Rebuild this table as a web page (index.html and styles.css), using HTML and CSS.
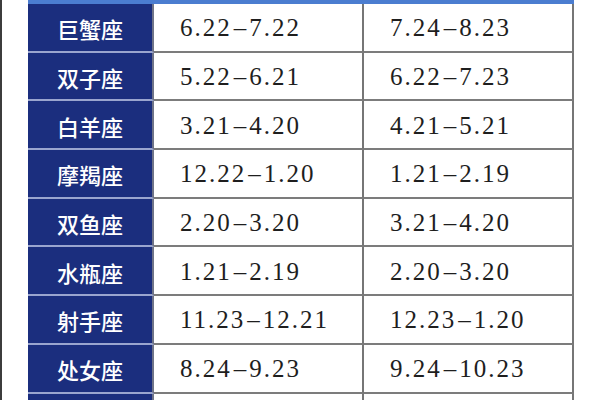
FILE: index.html
```html
<!DOCTYPE html>
<html lang="zh">
<head>
<meta charset="utf-8">
<title>星座日期对照表</title>
<link rel="stylesheet" href="styles.css">
</head>
<body>
<div class="page">
  <div class="table">
    <div class="head"></div>

    <div class="name">巨蟹座</div><div class="date">6.22<span class="sep">–</span>7.22</div><div class="date">7.24<span class="sep">–</span>8.23</div>
    <div class="name">双子座</div><div class="date">5.22<span class="sep">–</span>6.21</div><div class="date">6.22<span class="sep">–</span>7.23</div>
    <div class="name">白羊座</div><div class="date">3.21<span class="sep">–</span>4.20</div><div class="date">4.21<span class="sep">–</span>5.21</div>
    <div class="name">摩羯座</div><div class="date">12.22<span class="sep">–</span>1.20</div><div class="date">1.21<span class="sep">–</span>2.19</div>
    <div class="name">双鱼座</div><div class="date">2.20<span class="sep">–</span>3.20</div><div class="date">3.21<span class="sep">–</span>4.20</div>
    <div class="name">水瓶座</div><div class="date">1.21<span class="sep">–</span>2.19</div><div class="date">2.20<span class="sep">–</span>3.20</div>
    <div class="name">射手座</div><div class="date">11.23<span class="sep">–</span>12.21</div><div class="date">12.23<span class="sep">–</span>1.20</div>
    <div class="name">处女座</div><div class="date">8.24<span class="sep">–</span>9.23</div><div class="date">9.24<span class="sep">–</span>10.23</div>
    <div class="name">&nbsp;</div><div class="date">&nbsp;</div><div class="date">&nbsp;</div>
  </div>
</div>
</body>
</html>
```
FILE: styles.css
```css
html, body {
  margin: 0;
  padding: 0;
  background: #ffffff;
}
body {
  width: 600px;
  height: 400px;
  overflow: hidden;
}
.page {
  height: 400px;
  border-left: 2px solid #3c3c3c;
  padding-left: 26px;
  box-sizing: border-box;
}
.table {
  display: grid;
  grid-template-columns: 126px 210px 210px;
  grid-auto-rows: 48.7px;
  grid-template-rows: 4px;
}
.head {
  grid-column: 1 / span 3;
  background: #4b7dd0;
}
.name {
  background: #1b2e7e;
  color: #ffffff;
  font-family: "Noto Sans CJK SC", "Noto Sans", sans-serif;
  font-weight: 500;
  font-size: 22px;
  display: flex;
  align-items: center;
  justify-content: center;
  border-bottom: 2px solid #9aa5cf;
  border-right: 2px solid #6f7488;
  box-sizing: border-box;
  padding-top: 2px;
}
.date {
  color: #1e1e1e;
  font-family: "Liberation Serif", "Times New Roman", serif;
  font-size: 25px;
  letter-spacing: 2px;
  display: flex;
  align-items: center;
  padding-left: 26px;
  padding-top: 2px;
  border-bottom: 2px solid #7c7c7c;
  border-right: 2px solid #767676;
  box-sizing: border-box;
  white-space: pre;
}
.sep {
  padding: 0 1px 0 2px;
}
```
